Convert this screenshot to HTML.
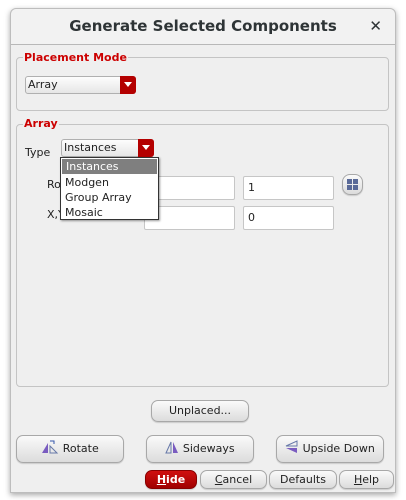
<!DOCTYPE html>
<html><head><meta charset="utf-8"><style>
*{box-sizing:border-box;margin:0;padding:0}
body{width:406px;height:500px;background:#fff;font-family:"DejaVu Sans","Liberation Sans",sans-serif;font-size:11px;color:#222;position:relative;overflow:hidden}
.win{position:absolute;left:10px;top:8px;width:386px;height:485px;background:#efefef;border:1px solid #bdbdbd;border-radius:6px 6px 0 0;box-shadow:0 2px 6px rgba(0,0,0,.35)}
.title{position:absolute;left:0;top:0;width:384px;height:36px;border-bottom:1px solid #b8b8b8;background:#f2f2f2;border-radius:6px 6px 0 0;font-weight:bold;font-size:15px;color:#2e3436;text-align:center;line-height:34px}
.title span{position:absolute;right:13px;top:0;font-size:15px}
.abs{position:absolute}
.grp{position:absolute;border:1px solid #c4c4c4;border-radius:4px}
.lbl{position:absolute;color:#cc0000;font-weight:bold;font-size:11px;background:#efefef;padding:0 1px}
.dd{position:absolute;border:1px solid #b0b0b0;border-radius:3px;background:linear-gradient(#fdfdfd,#e6e6e6);padding-left:2px;line-height:16px}
.dd i{position:absolute;right:-1px;top:-1px;bottom:-1px;width:16px;background:#b40000;border-radius:0 3px 3px 0}
.dd i:after{content:"";position:absolute;left:4px;top:6px;border:4px solid transparent;border-top:5px solid #fff;border-bottom:0}
.inp{position:absolute;background:#fff;border:1px solid #c6c6c6;border-radius:2px;padding-left:4px;line-height:21px}
.btn{position:absolute;border:1px solid #a8a8a8;border-radius:7px;background:linear-gradient(#fafafa,#dcdcdc);text-align:center;box-shadow:0 1px 1px rgba(0,0,0,.15)}
.pop{position:absolute;left:60px;top:157px;width:99px;height:63px;background:#fff;border:1px solid #333;box-shadow:1px 1px 2px rgba(0,0,0,.4)}
.pop div{height:15px;line-height:15px;padding-left:4px}
</style></head><body>
<div class="win">
<div class="title">Generate Selected Components<span>✕</span></div>
</div>
<div class="grp" style="left:16px;top:57px;width:373px;height:54px"></div>
<div class="lbl" style="left:23px;top:51px">Placement Mode</div>
<div class="dd" style="left:25px;top:76px;width:111px;height:18px">Array<i></i></div>

<div class="grp" style="left:16px;top:124px;width:373px;height:263px"></div>
<div class="lbl" style="left:23px;top:117px">Array</div>
<div class="abs" style="left:25px;top:146px">Type</div>
<div class="dd" style="left:61px;top:139px;width:93px;height:18px">Instances<i></i></div>
<div class="abs" style="left:47px;top:178px">Rows</div>
<div class="abs" style="left:47px;top:208px">X,Y Spacing</div>
<div class="inp" style="left:144px;top:176px;width:91px;height:24px"></div>
<div class="inp" style="left:243px;top:176px;width:91px;height:24px">1</div>
<div class="inp" style="left:144px;top:206px;width:91px;height:24px"></div>
<div class="inp" style="left:243px;top:206px;width:91px;height:24px">0</div>
<div class="btn" style="left:342px;top:174px;width:21px;height:21px;border-radius:8px">
<svg width="19" height="19" viewBox="0 0 19 19" style="position:absolute;left:0;top:0"><g fill="#5a6a98"><rect x="4" y="4" width="5" height="5"/><rect x="10" y="4" width="5" height="5"/><rect x="4" y="10" width="5" height="5"/><rect x="10" y="10" width="5" height="5"/></g></svg></div>
<div class="pop"><div style="background:#7f7f7f;color:#fff;margin:1px">Instances</div><div>Modgen</div><div>Group Array</div><div>Mosaic</div></div>

<div class="btn" style="left:151px;top:400px;width:98px;height:22px;line-height:20px">Unplaced...</div>
<div class="btn" style="left:16px;top:435px;width:108px;height:28px;line-height:26px">
<svg width="18" height="14" viewBox="0 0 18 14" style="vertical-align:-2px"><path d="M1 13L7 3V13Z" fill="#7a5cc0"/><path d="M9 13V6L16 13Z" fill="none" stroke="#6678a8"/><path d="M9 1h4v3" fill="none" stroke="#3355aa"/></svg> Rotate</div>
<div class="btn" style="left:146px;top:435px;width:108px;height:28px;line-height:26px">
<svg width="14" height="14" viewBox="0 0 14 14" style="vertical-align:-2px"><path d="M1 13L6 2V13Z" fill="none" stroke="#6678a8"/><path d="M8 2V13H13Z" fill="#7a5cc0"/></svg> Sideways</div>
<div class="btn" style="left:276px;top:435px;width:108px;height:28px;line-height:26px">
<svg width="14" height="14" viewBox="0 0 14 14" style="vertical-align:-2px"><path d="M1 6L12 1V6Z" fill="none" stroke="#6678a8"/><path d="M1 8H12V13Z" fill="#7a5cc0"/></svg> Upside Down</div>
<div class="btn" style="left:145px;top:470px;width:52px;height:19px;line-height:17px;background:linear-gradient(#d01010,#a00000);border-color:#800;color:#fff;font-weight:bold"><u>H</u>ide</div>
<div class="btn" style="left:200px;top:470px;width:67px;height:19px;line-height:17px"><u>C</u>ancel</div>
<div class="btn" style="left:269px;top:470px;width:68px;height:19px;line-height:17px">Defaults</div>
<div class="btn" style="left:339px;top:470px;width:55px;height:19px;line-height:17px"><u>H</u>elp</div>
</body></html>
